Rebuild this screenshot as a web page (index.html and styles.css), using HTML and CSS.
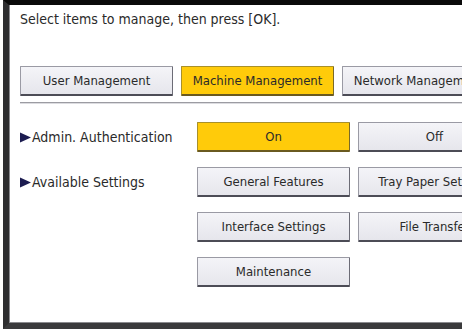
FILE: index.html
```html
<!DOCTYPE html>
<html>
<head>
	<meta charset="utf-8">
	<title>Administrator Tools</title>
	<link rel="stylesheet" href="styles.css">
</head>
<body>
	<div class="screen">
		<p class="prompt">Select items to manage, then press [OK].</p>

		<div class="tabs">
			<button class="btn">User Management</button>
			<button class="btn selected">Machine Management</button>
			<button class="btn">Network Management</button>
		</div>

		<div class="rule"></div>

		<div class="settings">
			<div class="label"><svg class="arrow" width="11" height="11" viewBox="0 0 11 11"><path d="M0 0.5 L11 5.5 L0 10.5 Z" fill="#1c1c50"/></svg>Admin. Authentication</div>
			<button class="btn selected">On</button>
			<button class="btn">Off</button>

			<div class="label"><svg class="arrow" width="11" height="11" viewBox="0 0 11 11"><path d="M0 0.5 L11 5.5 L0 10.5 Z" fill="#1c1c50"/></svg>Available Settings</div>
			<button class="btn">General Features</button>
			<button class="btn">Tray Paper Settings</button>

			<div class="label"></div>
			<button class="btn">Interface Settings</button>
			<button class="btn">File Transfer</button>

			<div class="label"></div>
			<button class="btn">Maintenance</button>
		</div>
	</div>
</body>
</html>
```

FILE: styles.css
```css
html, body {
	margin: 0;
	padding: 0;
	background: #ffffff;
}

body {
	width: 462px;
	height: 329px;
	padding-left: 3px;
	box-sizing: border-box;
	overflow: hidden;
	font-family: "DejaVu Sans Condensed", "DejaVu Sans", sans-serif;
	font-size: 14px;
	color: #2a2a2a;
}

.screen {
	height: 329px;
	box-sizing: border-box;
	border-top: 5px solid #0a0a0a;
	border-left: 6px solid #2e2e30;
	border-bottom: 6px solid #3a3a3c;
	box-shadow: inset 1px 0 0 #8a8a8e, inset 0 -1px 0 #8a8a8e;
	padding: 6px 0 0 11px;
	overflow: hidden;
}

.prompt {
	margin: 0;
	line-height: 17px;
	white-space: nowrap;
}

.tabs {
	display: flex;
	gap: 8px;
	margin-top: 38px;
}

.btn {
	flex: none;
	width: 153px;
	height: 30px;
	padding: 0;
	font-family: inherit;
	font-size: 13px;
	color: #2a2a2a;
	white-space: nowrap;
	overflow: hidden;
	background: linear-gradient(#f4f4f8, #e6e6ec);
	border: 1px solid #9a9aa4;
	border-right-color: #6c6c76;
	border-bottom: 2px solid #4c4c56;
	border-radius: 1px;
}

.btn.selected {
	background: #ffcb0a;
	border-color: #a8902a;
	border-right-color: #7a6a28;
	border-bottom-color: #6a5a20;
}

.rule {
	height: 1px;
	margin-top: 6px;
	width: 600px;
	background: #9c9ca2;
	border-bottom: 1px solid #dcdce0;
}

.settings {
	display: grid;
	grid-template-columns: 169px 153px 153px;
	grid-auto-rows: 30px;
	column-gap: 8px;
	row-gap: 15px;
	margin-top: 18px;
}

.label {
	display: flex;
	align-items: center;
	white-space: nowrap;
}

.arrow {
	flex: none;
	margin-right: 1px;
}
```
